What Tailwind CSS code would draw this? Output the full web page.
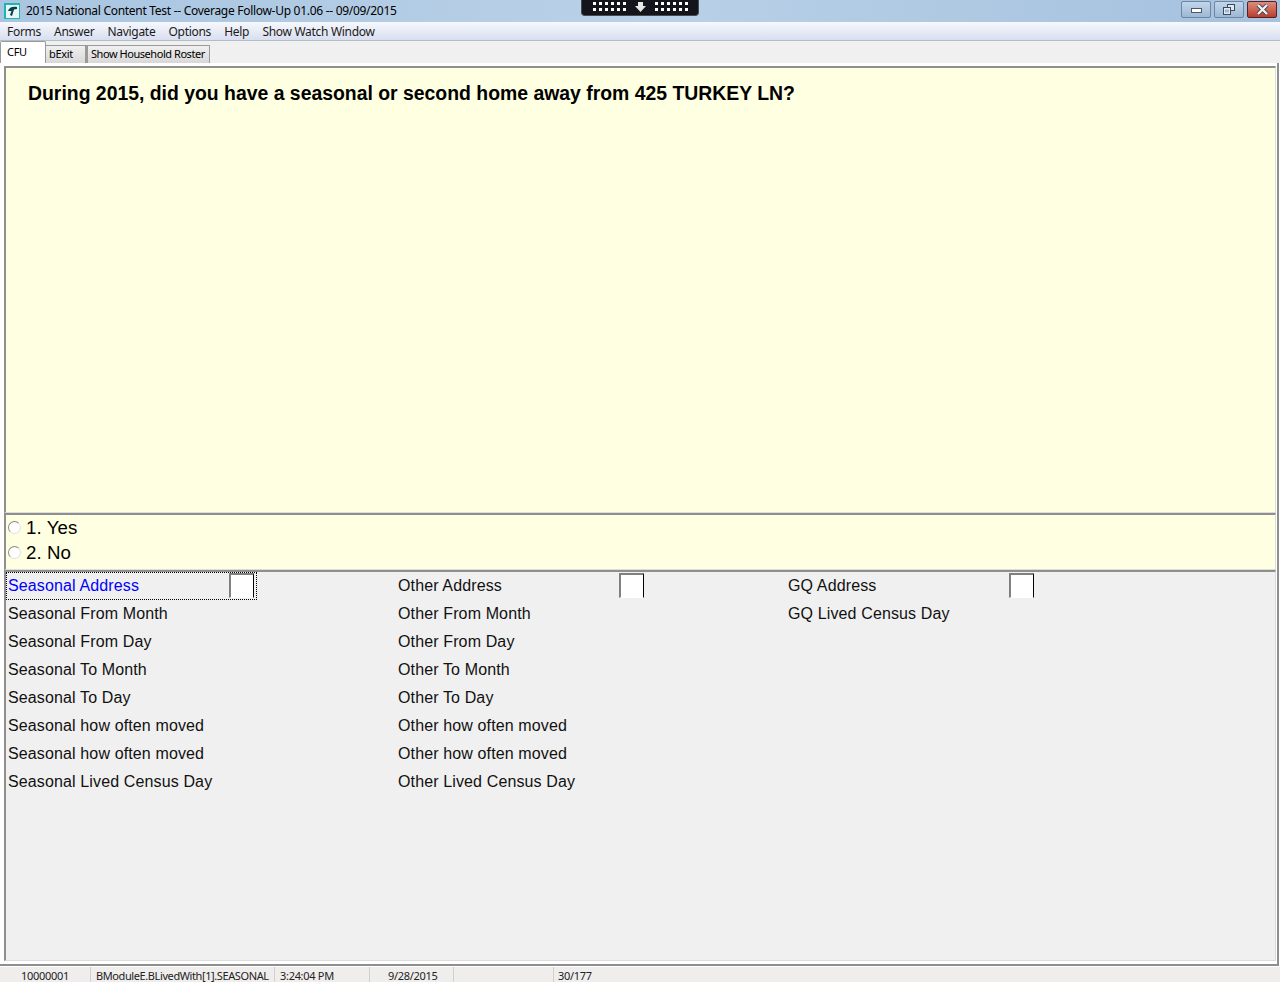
<!DOCTYPE html>
<html>
<head>
<meta charset="utf-8">
<script src="https://cdn.jsdelivr.net/npm/@tailwindcss/browser@4"></script>
</head>
<body class="overflow-hidden bg-[#f0f0f0]">
<div class="relative flex h-[982px] w-[1280px] flex-col overflow-hidden font-['Noto_Sans',sans-serif] text-[12px] text-black">

  <!-- title bar -->
  <div class="flex h-[22px] items-center justify-between bg-gradient-to-r from-[#a9c5e0] via-[#b9d1e8] to-[#a5c1de] pl-[4px] pr-[3px]">
    <div class="flex items-center gap-[6px]">
      <svg width="16" height="16" viewBox="0 0 16 16"><rect width="16" height="16" fill="#1cb5b5"/><rect x="2" y="2" width="13" height="13" fill="#e8f6f6"/><path d="M4 8 C5 4 9 3 13 4 L13 6 L10 6.500 L8 13 L6 12 L7.500 8 Z" fill="#0b3f4a"/></svg>
      <span class="leading-none tracking-[-0.29px]">2015 National Content Test -- Coverage Follow-Up 01.06 -- 09/09/2015</span>
    </div>
    <div class="flex items-start gap-[3px] self-start pt-[1px]">
      <div class="flex h-[17px] w-[30px] items-center justify-center rounded-[2px] border border-[#6d85a0] bg-gradient-to-b from-[#c3d6e9] to-[#9db8d4]">
        <div class="mt-[2px] h-[5px] w-[11px] border border-[#4a5a6c] bg-white"></div>
      </div>
      <div class="flex h-[17px] w-[30px] items-center justify-center rounded-[2px] border border-[#6d85a0] bg-gradient-to-b from-[#c3d6e9] to-[#9db8d4]">
        <svg width="12" height="11" viewBox="0 0 12 11"><rect x="4.500" y="0.500" width="7" height="6" fill="#dfe8f1" stroke="#3b4a5c"/><rect x="0.500" y="3.500" width="7" height="7" fill="#dfe8f1" stroke="#3b4a5c"/><rect x="2" y="5.500" width="4" height="3" fill="#9db8d4"/></svg>
      </div>
      <div class="flex h-[17px] w-[30px] items-center justify-center rounded-[2px] border border-[#5a1f1f] bg-gradient-to-b from-[#dc8b7c] to-[#b93c2e]">
        <svg width="13" height="11" viewBox="0 0 13 11"><path d="M2 1 L11 10 M11 1 L2 10" stroke="#39424d" stroke-width="4"/><path d="M2 1 L11 10 M11 1 L2 10" stroke="#f1f1f1" stroke-width="2.400"/></svg>
      </div>
    </div>
  </div>

  <!-- remote session bar -->
  <div class="absolute left-[581px] top-0 flex h-[16px] w-[118px] items-center justify-center gap-[9px] rounded-b-[4px] border-x border-b border-[#4a4a4a] bg-[#14141c] pb-[2px]">
    <div class="grid grid-cols-6 gap-x-[3px] gap-y-[3px]">
      <i class="size-[3px] bg-white"></i><i class="size-[3px] bg-white"></i><i class="size-[3px] bg-white"></i><i class="size-[3px] bg-white"></i><i class="size-[3px] bg-white"></i><i class="size-[3px] bg-white"></i>
      <i class="size-[3px] bg-white"></i><i class="size-[3px] bg-white"></i><i class="size-[3px] bg-white"></i><i class="size-[3px] bg-white"></i><i class="size-[3px] bg-white"></i><i class="size-[3px] bg-white"></i>
    </div>
    <svg width="11" height="10" viewBox="0 0 11 10"><path d="M3 0 H8 V4 H11 L5.500 10 L0 4 H3 Z" fill="#e8e8e8"/></svg>
    <div class="grid grid-cols-6 gap-x-[3px] gap-y-[3px]">
      <i class="size-[3px] bg-white"></i><i class="size-[3px] bg-white"></i><i class="size-[3px] bg-white"></i><i class="size-[3px] bg-white"></i><i class="size-[3px] bg-white"></i><i class="size-[3px] bg-white"></i>
      <i class="size-[3px] bg-white"></i><i class="size-[3px] bg-white"></i><i class="size-[3px] bg-white"></i><i class="size-[3px] bg-white"></i><i class="size-[3px] bg-white"></i><i class="size-[3px] bg-white"></i>
    </div>
  </div>

  <!-- menu bar -->
  <div class="flex h-[19px] items-center gap-[13.200px] border-b border-[#b4bcc8] bg-gradient-to-b from-[#f6f8fc] to-[#d9dff0] pl-[7px] pt-[1px] tracking-[-0.3px] text-[#1a1a1a]">
    <span>Forms</span><span>Answer</span><span>Navigate</span><span>Options</span><span>Help</span><span>Show Watch Window</span>
  </div>

  <!-- tabs -->
  <div class="flex h-[22px] items-end bg-[#f0f0f0]">
    <div class="z-10 flex h-[22px] w-[46px] items-start rounded-t-[2px] border border-b-0 border-[#9a9a9a] bg-white pl-[6px] pt-[2px] text-[11px] tracking-[-0.3px]">CFU</div>
    <div class="flex h-[18px] w-[40px] items-center border border-b-0 border-l-0 border-[#9a9a9a] bg-gradient-to-b from-[#f0f0f0] to-[#d8d8d8] pl-[3px] text-[11px] tracking-[-0.3px]">bExit</div>
    <div class="flex h-[18px] w-[124px] items-center border border-b-0 border-l-2 border-[#9a9a9a] bg-gradient-to-b from-[#f0f0f0] to-[#d8d8d8] pl-[3px] text-[11px] tracking-[-0.45px]">Show Household Roster</div>
  </div>

  <!-- tab page -->
  <div class="h-[904px] bg-white pb-[1px] pr-[1px]">
    <div class="flex h-[903px] flex-col border-b-2 border-r-2 border-[#8f8f8f] pl-[4px] pr-[1px] pt-[3px] font-['Liberation_Sans',sans-serif]">
      <div class="flex h-[447px] flex-col border-2 border-b border-r border-[#8f8f8f] border-b-[#dcdcdc] border-r-[#dcdcdc] bg-[#ffffe1] pl-[22px] pt-[14px]">
        <p class="text-[19.400px] font-bold leading-[23px]">During 2015, did you have a seasonal or second home away from 425 TURKEY LN?</p>
      </div>
      <div class="flex h-[57px] flex-col border-2 border-b border-r border-[#8f8f8f] border-b-[#dcdcdc] border-r-[#dcdcdc] bg-[#ffffe1] pl-[2px] text-[18.670px] leading-[25px] tracking-[0.1px]">
        <label class="flex h-[25px] items-center gap-[5px]"><span class="size-[13px] rounded-full border border-[#8a8a8a] border-b-[#e0e0e0] border-r-[#e0e0e0] bg-white"></span>1. Yes</label>
        <label class="flex h-[25px] items-center gap-[5px]"><span class="size-[13px] rounded-full border border-[#8a8a8a] border-b-[#e0e0e0] border-r-[#e0e0e0] bg-white"></span>2. No</label>
      </div>
      <div class="grid h-[391px] grid-cols-[390px_390px_1fr] border-2 border-b border-r border-[#8f8f8f] border-b-[#dcdcdc] border-r-[#dcdcdc] bg-[#f0f0f0] text-[16px] leading-[18px] tracking-[0.13px] text-[#111]">
        <div class="flex flex-col">
          <div class="flex h-[28px] w-[251px] items-center justify-between border border-dotted border-black pl-[1px] pr-[2px] text-[#0000ff]">Seasonal Address<span class="mb-[1px] h-[25px] w-[25px] border-2 border-r border-b border-[#808080] border-b-white border-r-black bg-white"></span></div>
          <div class="flex h-[28px] items-center pl-[2px]">Seasonal From Month</div>
          <div class="flex h-[28px] items-center pl-[2px]">Seasonal From Day</div>
          <div class="flex h-[28px] items-center pl-[2px]">Seasonal To Month</div>
          <div class="flex h-[28px] items-center pl-[2px]">Seasonal To Day</div>
          <div class="flex h-[28px] items-center pl-[2px]">Seasonal how often moved</div>
          <div class="flex h-[28px] items-center pl-[2px]">Seasonal how often moved</div>
          <div class="flex h-[28px] items-center pl-[2px]">Seasonal Lived Census Day</div>
        </div>
        <div class="flex flex-col">
          <div class="flex h-[28px] w-[251px] items-center justify-between pl-[2px] pr-[3px]">Other Address<span class="mb-[1px] h-[25px] w-[25px] border-2 border-r border-b border-[#808080] border-b-white border-r-black bg-white"></span></div>
          <div class="flex h-[28px] items-center pl-[2px]">Other From Month</div>
          <div class="flex h-[28px] items-center pl-[2px]">Other From Day</div>
          <div class="flex h-[28px] items-center pl-[2px]">Other To Month</div>
          <div class="flex h-[28px] items-center pl-[2px]">Other To Day</div>
          <div class="flex h-[28px] items-center pl-[2px]">Other how often moved</div>
          <div class="flex h-[28px] items-center pl-[2px]">Other how often moved</div>
          <div class="flex h-[28px] items-center pl-[2px]">Other Lived Census Day</div>
        </div>
        <div class="flex flex-col">
          <div class="flex h-[28px] w-[251px] items-center justify-between pl-[2px] pr-[3px]">GQ Address<span class="mb-[1px] h-[25px] w-[25px] border-2 border-r border-b border-[#808080] border-b-white border-r-black bg-white"></span></div>
          <div class="flex h-[28px] items-center pl-[2px]">GQ Lived Census Day</div>
        </div>
      </div>
    </div>
  </div>

  <!-- status bar -->
  <div class="flex h-[15px] items-center bg-[#f0eded] text-[11px] leading-[18px] tracking-[-0.3px] text-[#222]">
    <div class="h-full w-[91px] border-r border-[#d0d0d0] pl-[21px]">10000001</div>
    <div class="h-full w-[184px] whitespace-nowrap border-r border-[#d0d0d0] pl-[5px] tracking-[-0.4px]">BModuleE.BLivedWith[1].SEASONAL</div>
    <div class="h-full w-[95px] whitespace-nowrap border-r border-[#d0d0d0] pl-[5px]">3:24:04 PM</div>
    <div class="h-full w-[84px] border-r border-[#d0d0d0] pl-[18px]">9/28/2015</div>
    <div class="h-full w-[100px] border-r border-[#d0d0d0]"></div>
    <div class="h-full flex-1 pl-[4px]">30/177</div>
  </div>
</div>
</body>
</html>
